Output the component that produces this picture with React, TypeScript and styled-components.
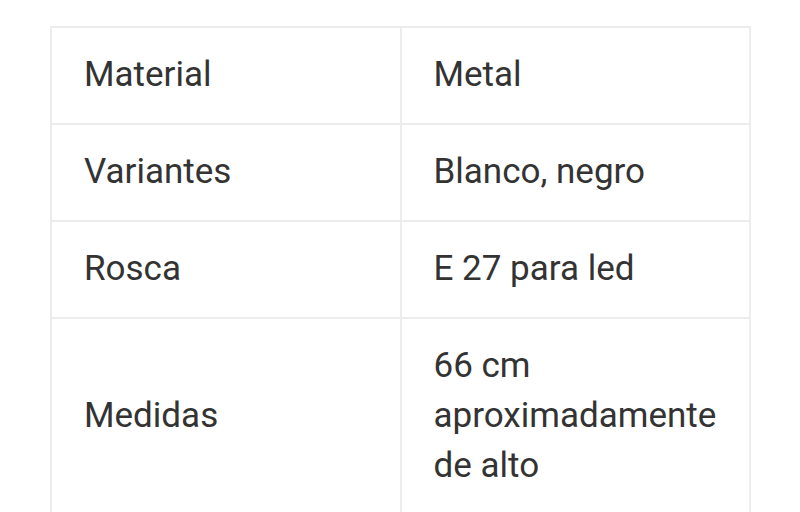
import React from "react";
import styled, { createGlobalStyle } from "styled-components";

const Global = createGlobalStyle`
  html, body { margin: 0; padding: 0; background: #ffffff; }
  body { font-family: Roboto, "Noto Sans", sans-serif; }
`;

const Page = styled.div`
  padding: 26px 50px 0 50px;
`;

const Table = styled.table`
  width: 701px;
  border-collapse: collapse;
  table-layout: fixed;
`;

const Cell = styled.td`
  width: 50%;
  border: 2px solid #ececec;
  padding: 22px 24px 23px 32px;
  font-size: 35px;
  line-height: 50px;
  color: #333333;
  vertical-align: middle;
`;

const rows: [string, string][] = [
  ["Material", "Metal"],
  ["Variantes", "Blanco, negro"],
  ["Rosca", "E 27 para led"],
  ["Medidas", "66 cm aproximadamente de alto"],
];

export default function App() {
  return (
    <Page>
      <Global />
      <Table>
        <tbody>
          {rows.map(([k, v]) => (
            <tr key={k}>
              <Cell>{k}</Cell>
              <Cell>{v}</Cell>
            </tr>
          ))}
        </tbody>
      </Table>
    </Page>
  );
}
